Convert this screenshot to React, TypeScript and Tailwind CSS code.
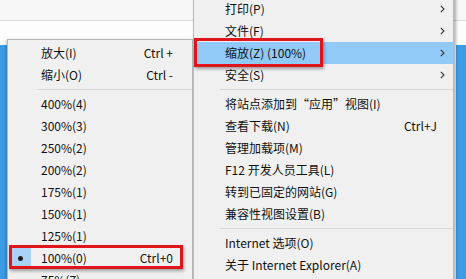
type Item = { label: string; shortcut?: string; arrow?: boolean; sep?: boolean; active?: boolean; checked?: boolean };

const zoomItems: Item[] = [
  { label: '放大(I)', shortcut: 'Ctrl +' },
  { label: '缩小(O)', shortcut: 'Ctrl -' },
  { label: '', sep: true },
  { label: '400%(4)' },
  { label: '300%(3)' },
  { label: '250%(2)' },
  { label: '200%(2)' },
  { label: '175%(1)' },
  { label: '150%(1)' },
  { label: '125%(1)' },
  { label: '100%(0)', shortcut: 'Ctrl+0', checked: true },
  { label: '75%(7)' },
];

const toolItems: Item[] = [
  { label: '打印(P)', arrow: true },
  { label: '文件(F)', arrow: true },
  { label: '缩放(Z) (100%)', arrow: true, active: true },
  { label: '安全(S)', arrow: true },
  { label: '', sep: true },
  { label: '将站点添加到“应用”视图(I)' },
  { label: '查看下载(N)', shortcut: 'Ctrl+J' },
  { label: '管理加载项(M)' },
  { label: 'F12 开发人员工具(L)' },
  { label: '转到已固定的网站(G)' },
  { label: '兼容性视图设置(B)' },
  { label: '', sep: true },
  { label: 'Internet 选项(O)' },
  { label: '关于 Internet Explorer(A)' },
];

const Chevron = () => (
  <svg width="5" height="8" viewBox="0 0 5 8" className="text-[#333]">
    <path d="M0.8 0.8 L4 4 L0.8 7.2" fill="none" stroke="currentColor" strokeWidth="1.1" />
  </svg>
);

const App = () => {
  return (
    <div className="relative w-[466px] h-[279px] overflow-hidden bg-white text-[12px] text-[#111] font-['Microsoft_YaHei','Noto_Sans_CJK_SC',sans-serif]">
      {/* page behind the menus */}
      <div className="h-[21px] bg-[#f7f7f7] border-b border-[#dedede]" />
      <div className="h-[24px] bg-[#fdfdfd]" />
      <div className="flex h-[234px]">
        <div className="w-[8px] bg-[#3d9be6]" />
        <div className="flex-1 bg-[#fdfdfd]" />
        <div className="w-[10px] bg-[#3d9be6]" />
      </div>

      {/* zoom submenu */}
      <div className="absolute left-[7px] top-[39px] w-[186px] h-[260px] bg-[#f0f0f0] border border-[#b9b9b9] pt-[2px] shadow-[-1px_1px_3px_rgba(0,0,0,0.25)]">
        {zoomItems.map((it, i) =>
          it.sep ? (
            <div key={i} className="h-[7px] flex items-center pl-[29px]">
              <div className="h-px w-full bg-[#d7d7d7]" />
            </div>
          ) : (
            <div key={i} className="relative h-[22px] flex items-center justify-between pl-[33px] pr-[19px] leading-none">
              {it.checked && (
                <div className="absolute left-[2px] top-[1px] w-[21px] h-[20px] bg-[#a9d3f6] flex items-center justify-center">
                  <div className="w-[5px] h-[5px] rounded-full bg-[#1e1e1e]" />
                </div>
              )}
              <span>{it.label}</span>
              {it.shortcut && <span>{it.shortcut}</span>}
            </div>
          )
        )}
      </div>

      {/* tools menu */}
      <div className="absolute left-[193px] top-[-4px] w-[261px] h-[290px] bg-[#f0f0f0] border border-[#b9b9b9] pt-[1px] shadow-[2px_1px_3px_rgba(0,0,0,0.3)]">
        {toolItems.map((it, i) =>
          it.sep ? (
            <div key={i} className="h-[7px] flex items-center pl-[26px]">
              <div className="h-px w-full bg-[#d7d7d7]" />
            </div>
          ) : (
            <div
              key={i}
              className={`h-[22px] ml-px flex items-center pl-[30px] pr-[8px] leading-none ${it.active ? 'bg-[#91c9f7]' : ''}`}
            >
              <span className="flex-1">{it.label}</span>
              {it.shortcut && <span className="mr-[8px]">{it.shortcut}</span>}
              {it.arrow && <Chevron />}
            </div>
          )
        )}
      </div>

      {/* red annotation boxes */}
      <div className="absolute left-[194px] top-[38px] w-[129px] h-[29px] border-[3px] border-[#e0141c] shadow-[1px_2px_3px_rgba(0,0,0,0.35)]" />
      <div className="absolute left-[9px] top-[245px] w-[174px] h-[24px] border-[3px] border-[#e0141c] shadow-[1px_2px_3px_rgba(0,0,0,0.35)]" />
    </div>
  );
};

export default App;
